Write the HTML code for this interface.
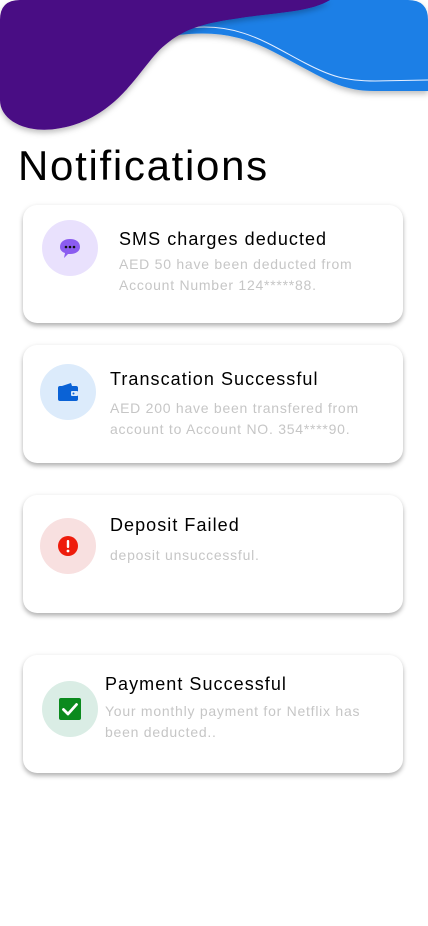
<!DOCTYPE html>
<html><head><meta charset="utf-8"><style>
html,body{margin:0;padding:0;background:#fff;}
body{width:428px;height:926px;position:relative;overflow:hidden;font-family:"Liberation Sans",sans-serif;}
.h1{position:absolute;left:18px;top:142px;font-size:42px;color:#000;letter-spacing:1.7px;}
.card{position:absolute;left:23px;width:380px;height:118px;background:#fff;border-radius:14px;box-shadow:0 3px 5px rgba(0,0,0,0.28),0 0 6px rgba(0,0,0,0.05);}
.ic{position:absolute;width:56px;height:56px;border-radius:50%;}
.t{position:absolute;font-size:18px;color:#000;white-space:nowrap;letter-spacing:1.05px;}
.b{position:absolute;font-size:14px;color:#c6c6c6;line-height:21px;white-space:nowrap;letter-spacing:0.75px;}
</style></head><body>
<svg width="428" height="140" style="position:absolute;left:0;top:0">
<defs><filter id="s" x="-10%" y="-10%" width="120%" height="130%"><feDropShadow dx="0" dy="3" stdDeviation="3" flood-color="#000" flood-opacity="0.25"/></filter></defs>
<path filter="url(#s)" d="M150,40 C230,22 260,45 300,66 C330,82 345,91 375,91 L428,91 L428,20 Q428,0 408,0 L150,0 Z" fill="#1a7fe6"/>
<path d="M188,28 C240,22 270,45 305,63 C330,76 345,81 375,81 L428,80" fill="none" stroke="#e6efff" stroke-width="1"/>
<path filter="url(#s)" d="M0,20 Q0,0 20,0 L330,0 C310,12 280,12 240,18 C205,23 185,28 165,45 C140,65 120,120 55,129 C25,133 0,120 0,100 Z" fill="#4a0784"/>
</svg>
<div class="h1">Notifications</div>

<div class="card" style="top:205px"></div>
<div class="ic" style="left:42px;top:220px;background:#e9e1fd"></div>
<svg style="position:absolute;left:58px;top:236px" width="24" height="24" viewBox="0 0 24 24"><path d="M12,3 C18,3 22,6 22,11 C22,15 18,18 12,18 L10,18 L6,22 L7,17 C4,16 2,14 2,11 C2,6 6,3 12,3 Z" fill="#8b5cf0"/><circle cx="8" cy="11" r="1.3" fill="#111"/><circle cx="12" cy="11" r="1.3" fill="#111"/><circle cx="16" cy="11" r="1.3" fill="#111"/></svg>
<div class="t" style="left:119px;top:229px">SMS charges deducted</div>
<div class="b" style="left:119px;top:254px">AED 50 have been deducted from<br>Account Number 124*****88.</div>

<div class="card" style="top:345px"></div>
<div class="ic" style="left:40px;top:364px;background:#dcebfb"></div>
<svg style="position:absolute;left:56px;top:380px" width="24" height="24" viewBox="0 0 24 24"><path d="M6,6 L15,3 L16,6 Z" fill="#0a62d6"/><rect x="2" y="6" width="20" height="15" rx="2" fill="#0a62d6"/><rect x="15" y="11" width="7" height="5" rx="1" fill="#dcebfb"/><circle cx="17.5" cy="13.5" r="1" fill="#0a62d6"/></svg>
<div class="t" style="left:110px;top:369px">Transcation Successful</div>
<div class="b" style="left:110px;top:398px">AED 200 have been transfered from<br>account to Account NO. 354****90.</div>

<div class="card" style="top:495px"></div>
<div class="ic" style="left:40px;top:518px;background:#f8e0e0"></div>
<svg style="position:absolute;left:56px;top:534px" width="24" height="24" viewBox="0 0 24 24"><circle cx="12" cy="12" r="10" fill="#ee1c0c"/><rect x="10.8" y="6" width="2.4" height="8" rx="1" fill="#fff"/><circle cx="12" cy="17" r="1.4" fill="#fff"/></svg>
<div class="t" style="left:110px;top:515px">Deposit Failed</div>
<div class="b" style="left:110px;top:545px">deposit unsuccessful.</div>

<div class="card" style="top:655px"></div>
<div class="ic" style="left:42px;top:681px;background:#daede5"></div>
<svg style="position:absolute;left:58px;top:697px" width="24" height="24" viewBox="0 0 24 24"><rect x="1" y="1" width="22" height="22" rx="2" fill="#0b8a1e"/><path d="M5.5,12.5 L10,17 L18.5,7.5" fill="none" stroke="#fff" stroke-width="2.8" stroke-linecap="round" stroke-linejoin="round"/></svg>
<div class="t" style="left:105px;top:674px">Payment Successful</div>
<div class="b" style="left:105px;top:701px">Your monthly payment for Netflix has<br>been deducted..</div>
</body></html>
